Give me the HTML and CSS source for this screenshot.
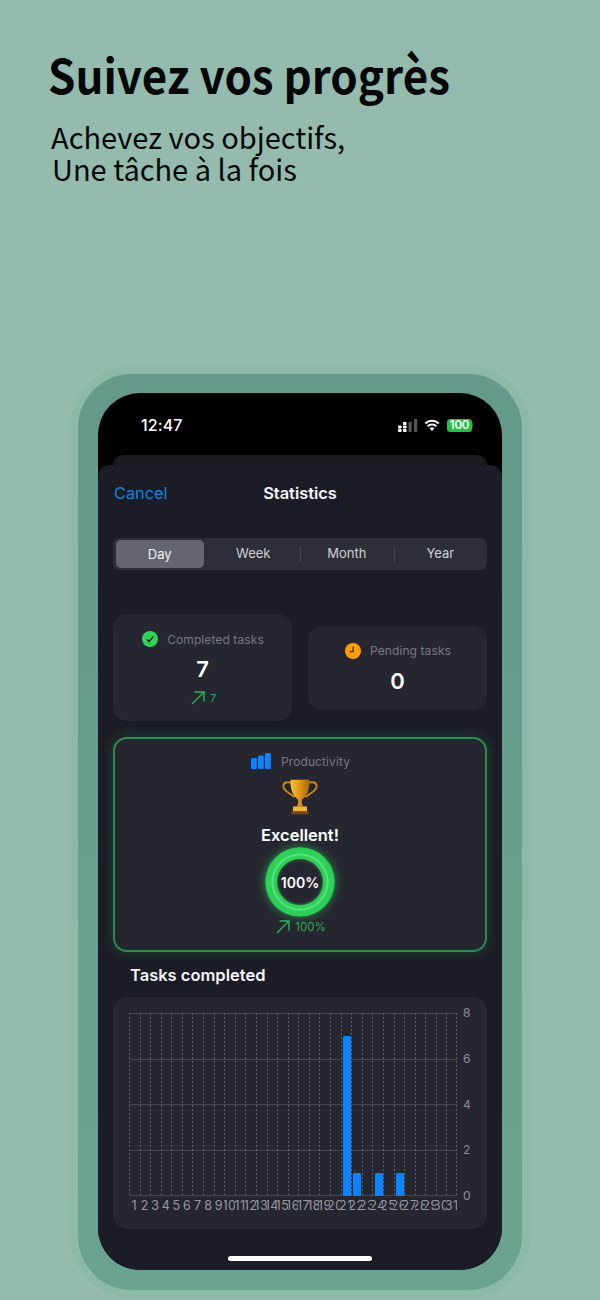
FILE: index.html
```html
<!DOCTYPE html>
<html lang="fr">
<head>
<meta charset="utf-8">
<title>Suivez vos progrès</title>
<link rel="stylesheet" href="styles.css">
</head>
<body>
<header class="promo">
  <h1>Suivez vos progrès</h1>
  <p>Achevez vos objectifs,<br><span class="nudge">Une tâche à la fois</span></p>
</header>
<div class="halo">
  <div class="frame">
    <div class="screen">
      <div class="status">
        <span class="time">12:47</span>
        <div class="status-icons">
          <svg class="signal" width="20" height="13" viewBox="0 0 20 13"><g fill="#fff"><rect x="0" y="6.500" width="3.600" height="3" rx=".8"/><rect x="0" y="10" width="3.600" height="3" rx=".8"/><rect x="5" y="3" width="3.600" height="3" rx=".8"/><rect x="5" y="6.500" width="3.600" height="3" rx=".8"/><rect x="5" y="10" width="3.600" height="3" rx=".8"/></g><g fill="#555"><rect x="10.500" y="3" width="3.200" height="10" rx=".8"/><rect x="16" y="0" width="3.200" height="13" rx=".8"/></g></svg>
          <svg class="wifi" width="16" height="12" viewBox="0 0 16 12"><path d="M8 12 5.600 9.300a3.500 3.500 0 0 1 4.800 0Z" fill="#fff"/><path d="M3.700 7.200a6.200 6.200 0 0 1 8.600 0M1.300 4.400a9.800 9.800 0 0 1 13.400 0" fill="none" stroke="#fff" stroke-width="2"/></svg>
          <span class="battery">100</span>
          <i class="battery-nub"></i>
        </div>
      </div>
      <div class="back-sheet"></div>
      <main class="sheet">
        <nav class="nav">
          <span class="cancel">Cancel</span>
          <span class="nav-title">Statistics</span>
        </nav>
        <div class="segmented">
          <span class="seg seg-active">Day</span>
          <span class="seg">Week</span>
          <span class="seg seg-sep">Month</span>
          <span class="seg seg-sep">Year</span>
        </div>
        <section class="stats">
          <div class="card stat">
            <div class="stat-head">
              <svg width="16" height="16" viewBox="0 0 16 16"><circle cx="8" cy="8" r="8" fill="#30d158"/><path d="M4.800 8.200 7.100 10.600 11.300 5.600" fill="none" stroke="#12301c" stroke-width="1.500"/></svg>
              <span>Completed tasks</span>
            </div>
            <div class="stat-num">7</div>
            <div class="trend">
              <svg width="14" height="14" viewBox="0 0 14 14"><path d="M1 13 13 1M3.500 1H13V10.500" fill="none" stroke="#30b158" stroke-width="1.400"/></svg>
              <span>7</span>
            </div>
          </div>
          <div class="card stat stat-short">
            <div class="stat-head">
              <svg width="16" height="16" viewBox="0 0 16 16"><circle cx="8" cy="8" r="8" fill="#ff9f0a"/><path d="M8.200 3.500V8.600H4.600" fill="none" stroke="#3a2a10" stroke-width="1.200"/></svg>
              <span>Pending tasks</span>
            </div>
            <div class="stat-num">0</div>
          </div>
        </section>
        <section class="card productivity">
          <div class="stat-head">
            <svg width="20" height="16" viewBox="0 0 20 16"><g fill="#0a84ff"><rect x="0" y="5" width="5.800" height="11" rx="1.200"/><rect x="7" y="2.500" width="5.800" height="13.500" rx="1.200"/><rect x="14" y="0" width="5.800" height="16" rx="1.200"/></g></svg>
            <span class="prod-label">Productivity</span>
          </div>
          <svg class="trophy" width="36" height="36" viewBox="0 0 36 36">
            <defs><linearGradient id="gold" x1="0" x2="1" y1="0" y2="0"><stop offset="0" stop-color="#f6c23c"/><stop offset=".5" stop-color="#dd9416"/><stop offset="1" stop-color="#a9650c"/></linearGradient></defs>
            <path d="M9.500 4C5 2 1.400 3.600 1.400 7.200 1.400 12 7 13.500 12.500 18M26.500 4C31 2 34.600 3.600 34.600 7.200 34.600 12 29 13.500 23.500 18" fill="none" stroke="#c98a14" stroke-width="1.900"/>
            <path d="M8.500 .8H27.500C27.800 10 25.500 17 20 20.500 19.400 23 19.600 25 21.500 27.500H14.500C16.400 25 16.600 23 16 20.500 10.500 17 8.200 10 8.500 .8Z" fill="url(#gold)"/>
            <rect x="11" y="27.500" width="14" height="5" fill="#eeb63e"/>
            <rect x="9.500" y="32.500" width="17" height="2.800" fill="#7d4510"/>
          </svg>
          <div class="verdict">Excellent!</div>
          <div class="ring">100%</div>
          <div class="trend trend-wide">
            <svg width="14" height="14" viewBox="0 0 14 14"><path d="M1 13 13 1M3.500 1H13V10.500" fill="none" stroke="#30b158" stroke-width="1.400"/></svg>
            <span>100%</span>
          </div>
        </section>
        <h2 class="chart-title">Tasks completed</h2>
        <section class="card chart">
          <div class="plot">
            <i class="col"></i><i class="col"></i><i class="col"></i><i class="col"></i><i class="col"></i><i class="col"></i><i class="col"></i><i class="col"></i><i class="col"></i><i class="col"></i>
            <i class="col"></i><i class="col"></i><i class="col"></i><i class="col"></i><i class="col"></i><i class="col"></i><i class="col"></i><i class="col"></i><i class="col"></i><i class="col"></i>
            <i class="col"><b class="bar" style="height:160px"></b></i><i class="col"><b class="bar" style="height:23px"></b></i><i class="col"></i><i class="col"><b class="bar" style="height:23px"></b></i><i class="col"></i><i class="col"><b class="bar" style="height:23px"></b></i><i class="col"></i><i class="col"></i><i class="col"></i><i class="col"></i>
            <i class="col col-last"></i>
          </div>
          <div class="yaxis"><span>8</span><span>6</span><span>4</span><span>2</span><span>0</span></div>
          <div class="xaxis">
            <span>1</span><span>2</span><span>3</span><span>4</span><span>5</span><span>6</span><span>7</span><span>8</span><span>9</span><span>10</span>
            <span>11</span><span>12</span><span>13</span><span>14</span><span>15</span><span>16</span><span>17</span><span>18</span><span>19</span><span>20</span>
            <span>21</span><span>22</span><span>23</span><span>24</span><span>25</span><span>26</span><span>27</span><span>28</span><span>29</span><span>30</span><span>31</span>
          </div>
        </section>
        <div class="home"></div>
      </main>
    </div>
  </div>
</div>
</body>
</html>
```
FILE: styles.css
```css
* { box-sizing: border-box; }
html, body { margin: 0; height: 1300px; overflow: hidden; }
body { background: #94bbae; font-family: Inter, "Liberation Sans", sans-serif; color: #fff; }

.promo { height: 366px; padding: 44px 0 0 48px; color: #050807; font-family: "Noto Sans CJK SC", "Noto Sans", sans-serif; }
.promo h1 { margin: 0; font-size: 47px; line-height: 60px; font-weight: 700; transform: scaleX(.935); transform-origin: left center; white-space: nowrap; }
.promo p { margin: 16px 0 0 3px; font-size: 29px; line-height: 32px; font-weight: 400; }
.nudge { margin-left: 1px; }

.halo { width: 460px; height: 932px; margin-left: 70px; padding: 8px; border-radius: 62px; background: #8cb9a8; }
.frame { height: 916px; padding: 19px 20px 20px; border-radius: 54px; background: linear-gradient(#65998a, #6aa38f); }
.screen { height: 877px; border-radius: 42px; overflow: hidden; background: #000; display: flex; flex-direction: column; }

.status { height: 62px; flex: none; padding: 22px 29px 0 43px; display: flex; justify-content: space-between; align-items: flex-start; }
.time { font-size: 16px; line-height: 20px; font-weight: 500; letter-spacing: .1px; }
.status-icons { display: flex; align-items: center; height: 20px; }
.signal { margin-right: 6px; }
.wifi { margin-right: 7px; }
.battery { width: 25px; height: 13px; border-radius: 3.500px; background: #27c04a; font-size: 11.500px; line-height: 13px; font-weight: 600; text-align: center; letter-spacing: -.2px; }
.battery-nub { width: 1px; height: 4px; background: #27653a; }

.back-sheet { height: 10px; flex: none; margin: 0 15px; border-radius: 10px 10px 0 0; background: #1b1b1d; }
.sheet { flex: 1; padding: 0 15px; border-radius: 12px 12px 0 0; background: #1c1c26; display: flex; flex-direction: column; }

.nav { height: 56px; flex: none; display: flex; align-items: center; justify-content: center; position: relative; }
.cancel { position: absolute; left: 1px; font-size: 16.300px; color: #1583d8; }
.nav-title { font-size: 16.400px; font-weight: 600; color: #f4f4f6; }

.segmented { height: 32px; margin-top: 17px; flex: none; display: grid; grid-template-columns: repeat(4, 1fr); border-radius: 7px; background: #2e2e38; }
.seg { padding-bottom: 2px; display: flex; align-items: center; justify-content: center; font-size: 13px; color: #d2d2d6; background: linear-gradient(#43434d, #43434d) left center / 0 0 no-repeat; }
.seg-sep { background-size: 1px 16px; }
.seg-active { margin: 2px 3px; padding-bottom: 1px; border-radius: 5px; background: #65656f; color: #f2f2f4; }

.card { border-radius: 14px; background: #262630; }
.stats { margin-top: 44px; flex: none; display: grid; grid-template-columns: 179px 179px; justify-content: space-between; align-items: center; }
.stat { height: 107px; padding-top: 17px; display: flex; flex-direction: column; align-items: center; }
.stat-short { height: 84px; }
.stat-head { height: 16px; padding-left: 1px; display: flex; align-items: center; justify-content: center; gap: 9px; font-size: 12px; color: #787880; letter-spacing: .1px; }
.stat-num { margin-top: 8px; font-size: 22px; line-height: 28px; font-weight: 600; }
.trend { margin-top: 7px; padding-left: 2px; height: 16px; display: flex; align-items: center; justify-content: center; gap: 5px; font-size: 11px; color: #2fa84f; }

.productivity { height: 215px; margin-top: 16px; flex: none; padding-top: 14px; border: 2px solid #2c8a4b; box-shadow: 0 0 14px rgba(48, 209, 88, .22); display: flex; flex-direction: column; align-items: center; }
.prod-label { margin-left: 1px; }
.trophy { margin-top: 10px; flex: none; }
.verdict { margin-top: 8px; font-size: 16.500px; line-height: 22px; font-weight: 600; padding-top: 1px; }
.ring { width: 70px; height: 70px; margin-top: 1px; flex: none; border-radius: 50%; display: flex; align-items: center; justify-content: center; font-size: 14px; font-weight: 600; background: radial-gradient(circle closest-side, #2ed15800 20px, #2ed15840 22.500px, #2ed158 23.500px, #2ed158 26px, #55e07b 27px, #55e07b 28px, #2ed158 29px, #2ed158 33.500px, #1fa84a 35px); box-shadow: 0 0 10px rgba(48, 209, 88, .6); }
.trend-wide { margin-top: 2px; font-size: 11.500px; }

.chart-title { margin: 12px 0 0 17px; font-size: 16.500px; line-height: 22px; font-weight: 600; color: #f4f4f6; flex: none; }

.chart { height: 232px; margin-top: 11px; flex: none; padding: 16px 0 0 16px; display: grid; grid-template-columns: 328px 30px; grid-template-rows: 183px auto; align-content: start; }
.plot { display: grid; grid-template-columns: repeat(31, 1fr); background: repeating-linear-gradient(to bottom, #45454e 0, #45454e 1px, transparent 1px, transparent 45.600px); }
.col { display: flex; align-items: flex-end; justify-content: center; background: repeating-linear-gradient(to bottom, #5e5e67 0, #5e5e67 2px, transparent 2px, transparent 4px) left top / 1px 100% no-repeat; }
.col-last { background: repeating-linear-gradient(to bottom, #5e5e67 0, #5e5e67 2px, transparent 2px, transparent 4px) left top / 1px 100% no-repeat, repeating-linear-gradient(to bottom, #5e5e67 0, #5e5e67 2px, transparent 2px, transparent 4px) right top / 1px 100% no-repeat; }
.bar { display: block; width: 8px; flex: none; margin-left: 2px; border-radius: 1.500px 1.500px 0 0; background: #0a84ff; }
.yaxis { margin: -7px 0 -7px 6px; display: flex; flex-direction: column; justify-content: space-between; font-size: 12px; line-height: 14px; color: #8e8e95; }
.xaxis { display: grid; grid-template-columns: repeat(31, minmax(0, 1fr)); grid-column: 1; margin-top: 3px; font-size: 12.500px; line-height: 14px; color: #98989f; letter-spacing: .6px; }
.xaxis span { overflow: hidden; white-space: nowrap; text-align: center; display: flex; justify-content: center; }

.home { width: 144px; height: 5px; margin: 27px auto 0; flex: none; border-radius: 3px; background: #fff; }
```
